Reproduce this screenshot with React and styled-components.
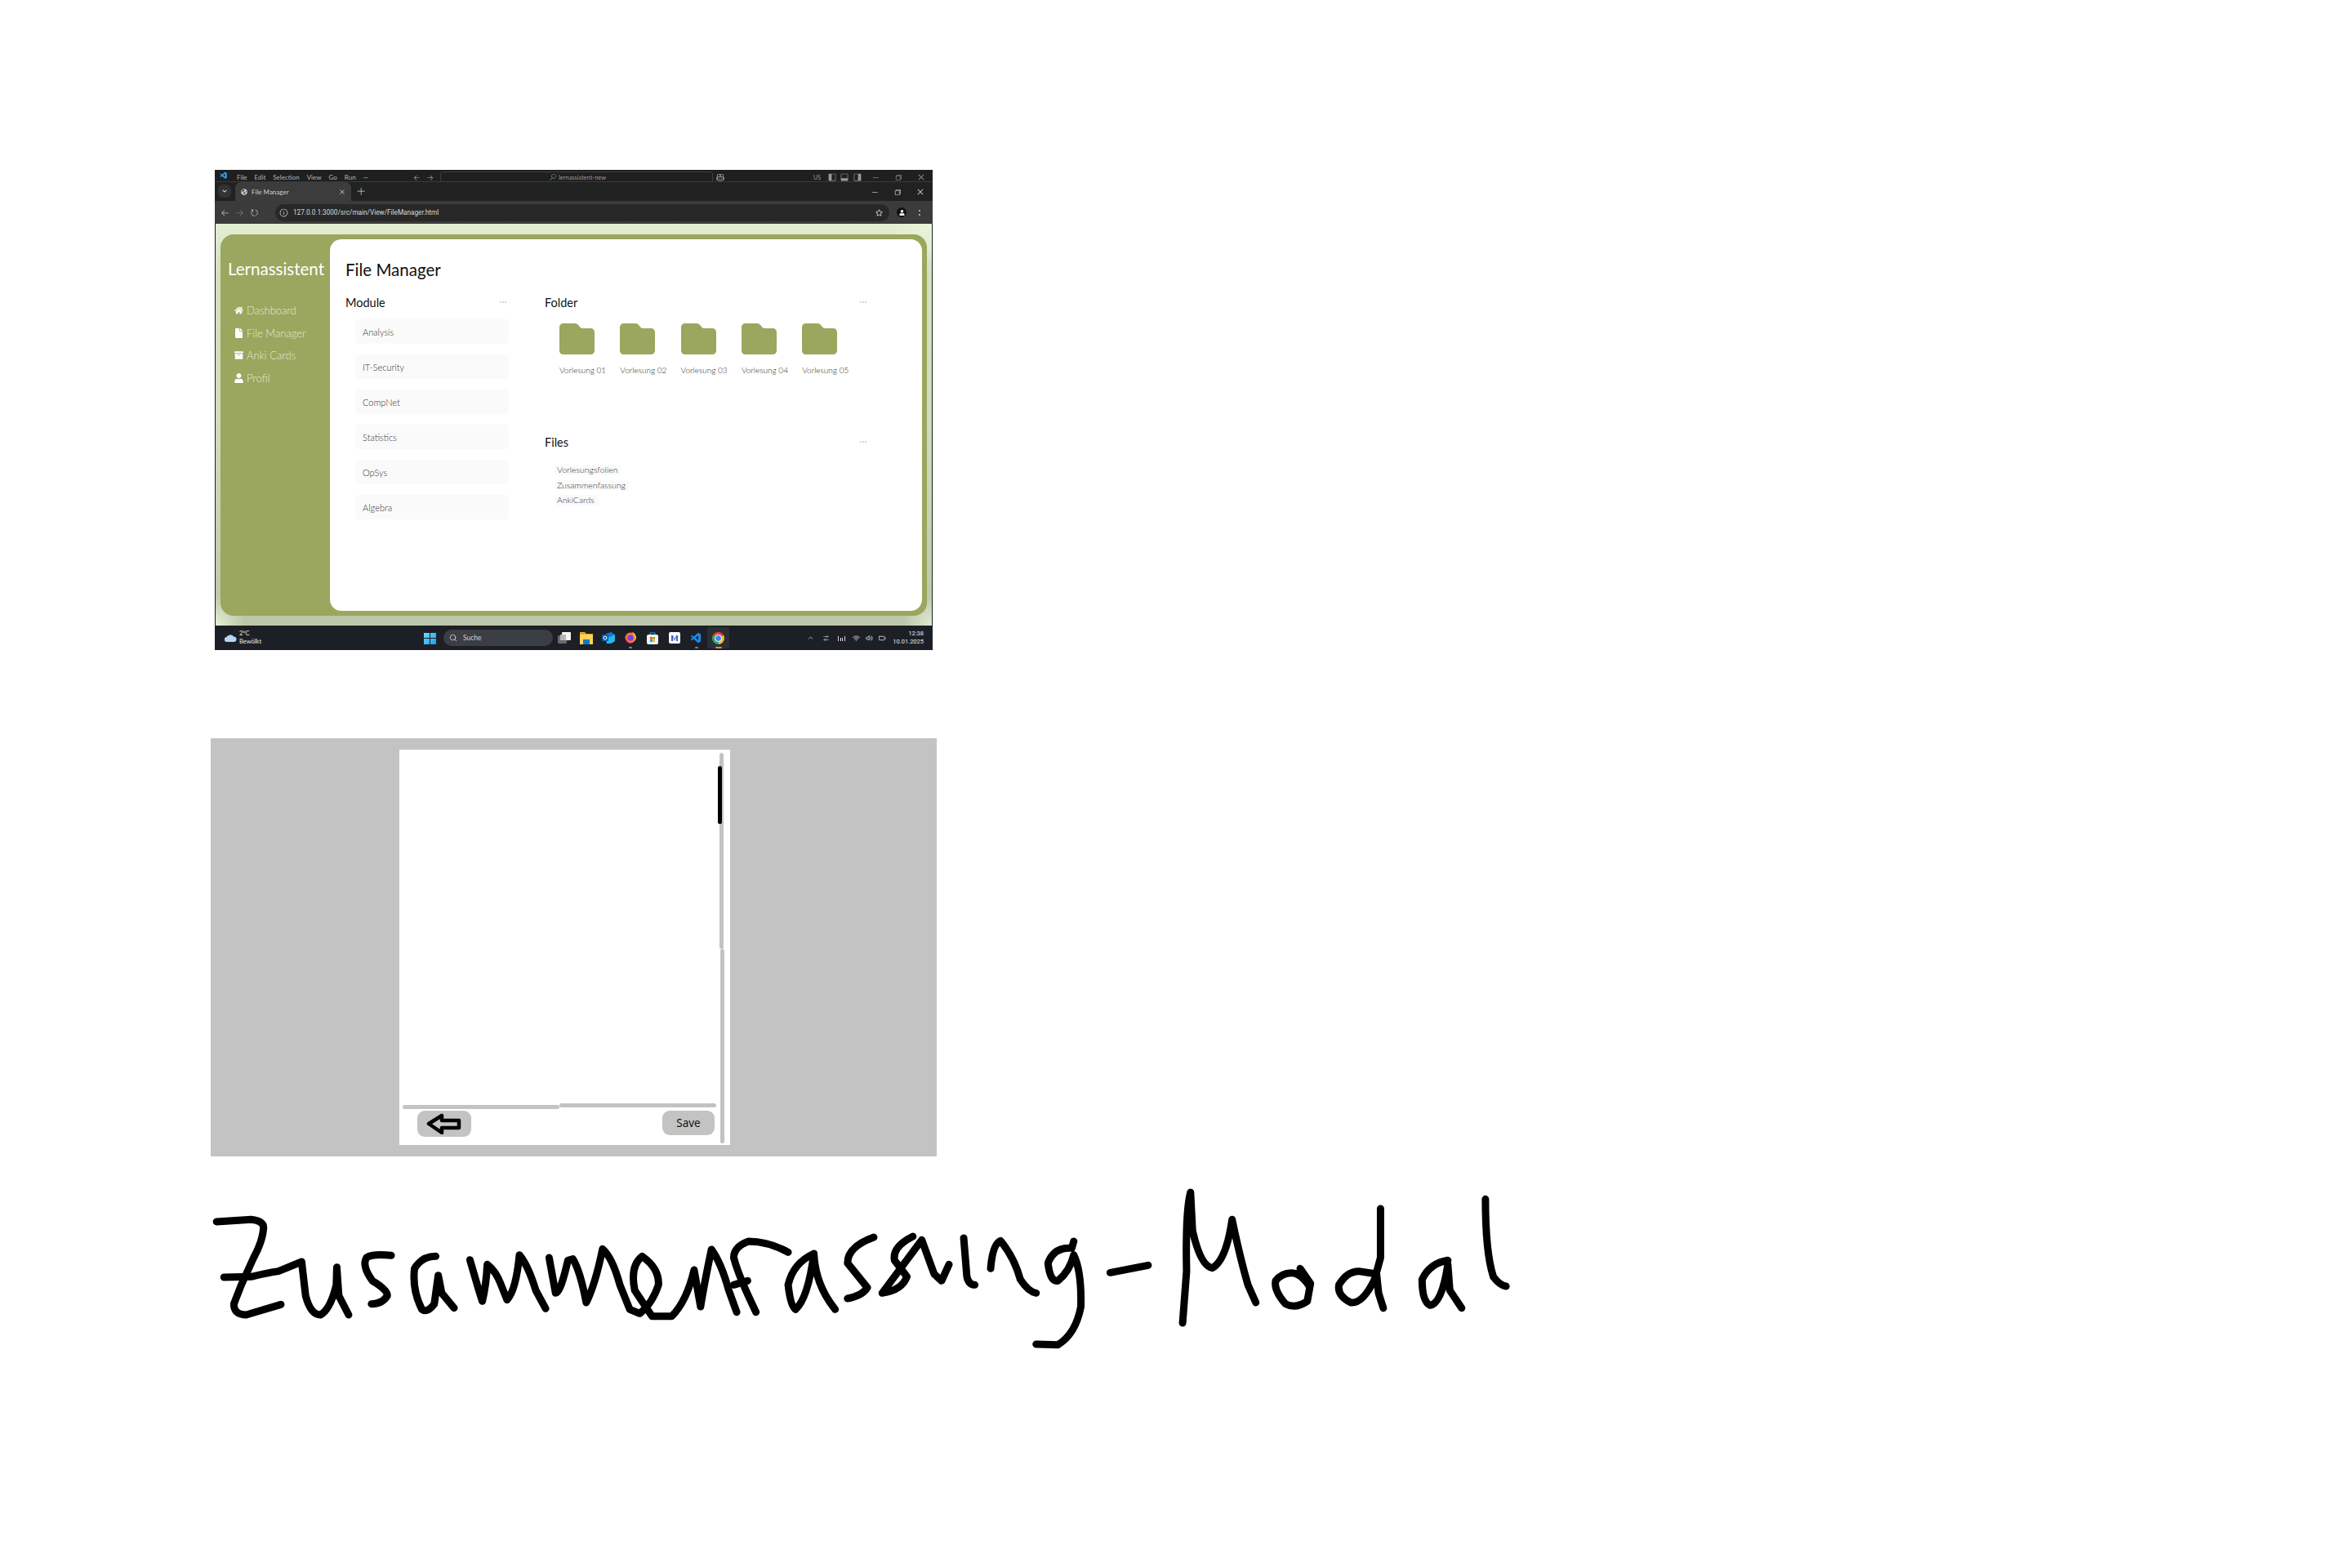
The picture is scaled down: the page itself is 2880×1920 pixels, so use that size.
import React from "react";
import styled, { createGlobalStyle } from "styled-components";
import { FaHome, FaFile, FaArchive, FaUser, FaGlobeAmericas, FaRegStar, FaChevronDown } from "react-icons/fa";
import { VscVscode, VscChromeMinimize, VscChromeRestore, VscChromeClose, VscLayoutSidebarLeft, VscLayoutPanel, VscLayoutSidebarRight, VscArrowLeft, VscArrowRight, VscSearch, VscRefresh, VscInfo, VscKebabVertical, VscAdd, VscCopilot, VscChevronUp, VscSettings } from "react-icons/vsc";
import { FiWifi, FiVolume2, FiBattery, FiSearch } from "react-icons/fi";

const Global = createGlobalStyle`
  html, body { margin: 0; padding: 0; background: #fff; }
  * { box-sizing: border-box; }
`;

const GREEN = "#9ba65e";
const GRAY = "#c3c3c3";

const Canvas = styled.div`
  position: relative;
  width: 2880px;
  height: 1920px;
  background: #fff;
  overflow: hidden;
  font-family: "Lato", "Open Sans", sans-serif;
`;

const Shot = styled.div`
  position: absolute;
  left: 263px;
  top: 208px;
  width: 879px;
  height: 588px;
  display: flex;
  flex-direction: column;
  background: #1f1f1f;
  overflow: hidden;
`;

const EditorBar = styled.div`
  height: 14px;
  flex: none;
  display: flex;
  align-items: flex-start;
  padding: 2px 0 0 6px;
  background: #1f1f1f;
  color: #b5b5b5;
  font-size: 8px;
  line-height: 9px;
  overflow: hidden;
`;
const EditorMenu = styled.div`
  display: flex;
  gap: 9px;
  margin-left: 11px;
  width: 216px;
  padding-top: 3px;
`;
const EditorNav = styled.div`
  display: flex;
  gap: 6.5px;
  width: 33px;
  padding-top: 3px;
  font-size: 9px;
`;
const EditorSearch = styled.div`
  width: 334px;
  height: 14px;
  border: 1px solid #3d3d3d;
  border-radius: 3px;
  padding: 2px 0 0 133px;
  display: flex;
  gap: 3px;
  color: #9a9a9a;
  font-size: 7.5px;
`;
const EditorIcons = styled.div`
  display: flex;
  align-items: center;
  padding-top: 2px;
  font-size: 10px;
  color: #9a9a9a;
`;
const IconSlot = styled.span`
  display: inline-flex;
  width: ${(p) => p.$w || 16}px;
  justify-content: center;
  align-items: center;
`;
const KeyboardTag = styled.span`
  display: inline-flex;
  width: ${(p) => p.$w}px;
  justify-content: flex-end;
  padding-right: 7px;
  font-size: 7px;
`;

const TabStrip = styled.div`
  height: 24px;
  flex: none;
  display: flex;
  align-items: flex-end;
  background: #202222;
  color: #dcdcdc;
  border-top: 1px solid #3a3a3a;
  padding-left: 4px;
`;
const TabMenu = styled.div`
  width: 16px;
  height: 16px;
  margin: 0 5px 4px 0;
  border-radius: 6px;
  background: #333;
  display: flex;
  align-items: center;
  justify-content: center;
  font-size: 6px;
`;
const Tab = styled.div`
  width: 142px;
  height: 23px;
  background: #3c3c3c;
  border-radius: 7px 7px 0 0;
  display: flex;
  align-items: center;
  gap: 5px;
  padding: 0 7px;
  font-size: 8px;
  color: #cfcfcf;
`;
const TabTitle = styled.span`
  flex: 1;
`;
const NewTab = styled.div`
  width: 24px;
  height: 23px;
  margin-left: 0;
  display: flex;
  align-items: center;
  justify-content: center;
  font-size: 11px;
`;
const Spacer = styled.div`
  flex: 1;
`;
const WinControls = styled.div`
  display: flex;
  align-items: center;
  height: 23px;
  padding-right: 1px;
  font-size: 10px;
`;
const WinSlot = styled.span`
  width: 28px;
  display: inline-flex;
  justify-content: center;
`;

const Toolbar = styled.div`
  height: 28px;
  flex: none;
  background: #3b3b3b;
  display: flex;
  align-items: center;
  padding-left: 7px;
  color: #c9c9c9;
  font-size: 11px;
`;
const NavIcons = styled.div`
  display: flex;
  width: 67px;
  gap: 7px;
`;
const Address = styled.div`
  width: 752px;
  height: 21px;
  margin-right: 0;
  background: #282828;
  border-radius: 11px;
  display: flex;
  align-items: center;
  padding: 0 8px 0 5px;
  gap: 6px;
  font-size: 8.2px;
  color: #d8d8d8;
  font-family: "Roboto", sans-serif;
`;
const Url = styled.span`
  flex: 1;
  padding-bottom: 1px;
`;
const ProfileDot = styled.span`
  width: 12px;
  height: 12px;
  border-radius: 50%;
  background: #111;
  color: #fff;
  display: flex;
  align-items: center;
  justify-content: center;
  font-size: 7px;
  margin-left: 9px;
`;

const Page = styled.div`
  flex: 1;
  min-height: 0;
  margin: 0 1px;
  padding: 13px 6px 12px 6px;
  background:
    radial-gradient(circle at 100% 0, #e9f4d9 0, rgba(233,244,217,0) 50px),
    radial-gradient(circle at 100% 100%, #e0ebcf 0, rgba(224,235,207,0) 36px),
    radial-gradient(circle at 0 100%, #e3eed4 0, rgba(227,238,212,0) 36px),
    linear-gradient(180deg, #e3eed3 0%, #d4e0c2 12%, #d0dcbe 50%, #bbc7a8 100%);
  display: flex;
`;
const AppFrame = styled.div`
  flex: 1;
  display: flex;
  background: ${GREEN};
  border-radius: 16px;
  padding: 6px 6px 6px 0;
`;
const Sidebar = styled.aside`
  width: 134px;
  flex: none;
  padding: 24px 0 0 9px;
  color: #fff;
`;
const Brand = styled.div`
  font-size: 20.5px;
  line-height: 24px;
  margin-bottom: 31px;
  white-space: nowrap;
`;
const NavList = styled.nav`
  display: flex;
  flex-direction: column;
  gap: 11.6px;
  padding-left: 8px;
`;
const NavItem = styled.div`
  display: flex;
  align-items: center;
  height: 16px;
  gap: 4px;
  font-size: 13px;
  font-weight: 300;
  color: #e6ebcf;
  svg { width: 11px; height: 12px; color: #fff; flex: none; }
`;
const Panel = styled.main`
  flex: 1;
  background: #fff;
  border-radius: 14px;
  padding: 25px 0 0 19px;
  color: #111;
`;
const PageTitle = styled.h1`
  margin: 0 0 19px;
  font-size: 20.5px;
  line-height: 24px;
  font-weight: 400;
`;
const Columns = styled.div`
  display: grid;
  grid-template-columns: 200px 397px;
  column-gap: 44px;
`;
const SectionHead = styled.div`
  display: flex;
  justify-content: space-between;
  align-items: center;
  height: 18px;
  padding-right: ${(p) => p.$pad || 3}px;
`;
const SectionTitle = styled.h2`
  margin: 0;
  font-size: 14.5px;
  font-weight: 400;
`;
const Dots = styled.span`
  display: flex;
  gap: 1px;
  i { width: 2px; height: 2px; background: #d6d6d6; display: block; }
`;
const ModuleList = styled.div`
  display: flex;
  flex-direction: column;
  gap: 12.6px;
  margin: 12px 0 0 12px;
`;
const ModuleItem = styled.div`
  height: 30.4px;
  background: #fafafa;
  border-radius: 4px;
  padding-left: 9px;
  display: flex;
  align-items: center;
  font-size: 11px;
  font-weight: 300;
  color: #333;
`;
const FolderSection = styled.section`
  height: 171px;
`;
const FolderRow = styled.div`
  display: flex;
  margin: 17px 0 0 18px;
`;
const FolderTile = styled.div`
  width: 74.3px;
  flex: none;
`;
const FolderLabel = styled.div`
  font-size: 10px;
  line-height: 12px;
  margin-top: 13px;
  font-weight: 300;
  color: #333;
  white-space: nowrap;
`;
const FileList = styled.div`
  display: flex;
  flex-direction: column;
  align-items: flex-start;
  gap: 6px;
  margin: 19px 0 0 12px;
`;
const FileItem = styled.div`
  background: #fafafa;
  border-radius: 4px;
  height: 12.5px;
  line-height: 12.5px;
  padding: 0 5px 0 3px;
  font-size: 10.5px;
  font-weight: 300;
  color: #333;
  white-space: nowrap;
`;

const Taskbar = styled.footer`
  height: 30px;
  flex: none;
  background: #1c2026;
  display: flex;
  align-items: center;
  color: #e8e8e8;
  position: relative;
`;
const Weather = styled.div`
  width: 256px;
  padding-left: 12px;
  display: flex;
  align-items: center;
  gap: 3px;
  font-size: 7.5px;
  line-height: 10px;
`;
const Search = styled.div`
  width: 134px;
  height: 20px;
  border-radius: 10px;
  background: #3b3e44;
  display: flex;
  align-items: center;
  gap: 7px;
  padding-left: 7px;
  font-size: 8.5px;
  color: #cfcfcf;
  margin: 0 0 0 9px;
`;
const TaskIcons = styled.div`
  display: flex;
  align-items: center;
  height: 30px;
`;
const TaskSlot = styled.div`
  width: 27px;
  height: 26px;
  display: flex;
  align-items: center;
  justify-content: center;
  border-radius: 3px;
  position: relative;
  background: ${(p) => (p.$active ? "#2a2e35" : "transparent")};
`;
const RunDot = styled.span`
  position: absolute;
  bottom: 0;
  left: 50%;
  margin-left: ${(p) => (p.$wide ? -4 : -2)}px;
  width: ${(p) => (p.$wide ? 8 : 4)}px;
  height: 2px;
  border-radius: 1px;
  background: ${(p) => p.$color || "#888"};
`;
const Tray = styled.div`
  margin-left: auto;
  display: flex;
  align-items: center;
  padding-right: 11px;
  font-size: 9px;
`;
const Clock = styled.div`
  text-align: right;
  font-size: 7.5px;
  line-height: 10px;
  margin-left: 5px;
  font-family: "Roboto", sans-serif;
`;
const ChromeIcon = styled.span`
  width: 15px;
  height: 15px;
  border-radius: 50%;
  background: conic-gradient(#e8453c 0 60deg, #f9bb2d 60deg 180deg, #34a853 180deg 300deg, #e8453c 300deg);
  display: flex;
  align-items: center;
  justify-content: center;
  &::after {
    content: "";
    width: 7px;
    height: 7px;
    border-radius: 50%;
    background: #4285f4;
    border: 1.2px solid #fff;
  }
`;

const Wire = styled.div`
  position: absolute;
  left: 258px;
  top: 904px;
  width: 889px;
  height: 512px;
  background: ${GRAY};
  padding: 14px 0 0 231px;
`;
const Modal = styled.div`
  width: 405px;
  height: 484px;
  background: #fff;
  display: flex;
  padding: 4px 7px 2px 4px;
  gap: 4px;
`;
const ModalMain = styled.div`
  flex: 1;
  display: flex;
  flex-direction: column;
`;
const ModalBody = styled.div`
  flex: 1;
`;
const RuleRow = styled.div`
  display: flex;
  height: 7px;
`;
const RulePart = styled.span`
  flex: 1;
  height: 5px;
  background: ${GRAY};
  margin-top: ${(p) => p.$drop}px;
  border-radius: 3px;
`;
const ActionRow = styled.div`
  display: flex;
  justify-content: space-between;
  align-items: flex-start;
  padding: 2px 2px 8px 18px;
`;
const WireButton = styled.button`
  width: ${(p) => p.$w}px;
  height: ${(p) => p.$h}px;
  border: 0;
  padding: 0;
  border-radius: 9px;
  background: ${GRAY};
  color: #111;
  font-family: "Noto Sans", sans-serif;
  font-size: 13.5px;
  display: flex;
  align-items: center;
  justify-content: center;
`;
const ScrollTrack = styled.div`
  width: 6px;
  position: relative;
  display: flex;
  flex-direction: column;
`;
const TrackPart = styled.span`
  display: block;
  height: ${(p) => p.$h}px;
  width: 5px;
  margin-left: ${(p) => p.$x}px;
  background: ${GRAY};
  border-radius: 3px;
`;
const Thumb = styled.span`
  position: absolute;
  left: -2px;
  top: 16px;
  width: 5px;
  height: 71px;
  border-radius: 3px;
  background: #000;
`;

const Ink = styled.svg`
  position: absolute;
  left: 240px;
  top: 1440px;
  width: 1700px;
  height: 240px;
  path {
    fill: none;
    stroke: #000;
    stroke-width: 9px;
    stroke-linecap: round;
    stroke-linejoin: round;
    vector-effect: non-scaling-stroke;
  }
`;

const FolderIcon = () => (
  <svg width="43" height="38" viewBox="0 0 43 38" style={{ display: "block" }}>
    <path fill={GREEN} d="M5 0h14c3 0 4 2 5 3s2 3 4 3h10c3 0 5 2 5 5v22c0 3-2 5-5 5H5c-3 0-5-2-5-5V5c0-3 2-5 5-5z" />
  </svg>
);

const Dot3 = () => (
  <Dots>
    <i />
    <i />
    <i />
  </Dots>
);

const modules = ["Analysis", "IT-Security", "CompNet", "Statistics", "OpSys", "Algebra"];
const folders = ["Vorlesung 01", "Vorlesung 02", "Vorlesung 03", "Vorlesung 04", "Vorlesung 05"];
const files = ["Vorlesungsfolien", "Zusammenfassung", "AnkiCards"];

const Win = () => (
  <svg width="15" height="15" viewBox="0 0 15 15">
    <defs>
      <linearGradient id="wg" x1="0" y1="0" x2="1" y2="1">
        <stop offset="0" stopColor="#6fdcff" />
        <stop offset="1" stopColor="#1a9be8" />
      </linearGradient>
    </defs>
    <path fill="url(#wg)" d="M0 1h7v6H0zM8 1h7v6H8zM0 8h7v7H0zM8 8h7v7H8z" />
  </svg>
);
const TaskView = () => (
  <svg width="16" height="14" viewBox="0 0 16 14">
    <rect x="0" y="4" width="11" height="10" rx="1.5" fill="#6a6a6a" />
    <rect x="5" y="0" width="11" height="10" rx="1" fill="#f4f4f4" />
    <rect x="3" y="3" width="7" height="7" fill="#b5b5b5" />
  </svg>
);
const Explorer = () => (
  <svg width="16" height="15" viewBox="0 0 16 15">
    <path fill="#e3a91f" d="M0 0h6l2 2h8v13H0z" />
    <path fill="#fcd45a" d="M0 3h16v12H0z" />
    <path fill="#0a7cc4" d="M4 9h8v6H4z" />
  </svg>
);
const Outlook = () => (
  <svg width="16" height="14" viewBox="0 0 16 14">
    <path fill="#0f78d4" d="M5 2 11 0l5 3v8l-5 3H6z" />
    <path fill="#29b6e8" d="M5 8l11-5v8l-5 3H6z" />
    <rect x="0" y="3" width="8" height="8" rx="1" fill="#0b5cad" />
    <circle cx="4" cy="7" r="2" fill="none" stroke="#fff" strokeWidth="1" />
  </svg>
);
const Firefox = () => (
  <svg width="14" height="14" viewBox="0 0 14 14">
    <circle cx="7" cy="7" r="6.5" fill="#ff7139" />
    <path fill="#ffbd4f" d="M9 0c4 1 5 5 5 7 0 1-1 3-2 4 1-4-1-8-3-11z" />
    <circle cx="7" cy="7" r="3.6" fill="#7542e5" />
    <path fill="#e31587" d="M1 8c0 3 3 6 6 6-2-1-4-3-6-6z" />
  </svg>
);
const Store = () => (
  <svg width="14" height="15" viewBox="0 0 14 15">
    <path fill="none" stroke="#1ea7e1" strokeWidth="1" d="M4 3V1h6v2" />
    <rect x="0" y="3" width="14" height="12" rx="2" fill="#f2f2f2" />
    <path fill="#f25022" d="M4 6h2.8v2.8H4z" />
    <path fill="#7fba00" d="M7.2 6H10v2.8H7.2z" />
    <path fill="#00a4ef" d="M4 9.2h2.8V12H4z" />
    <path fill="#ffb900" d="M7.2 9.2H10V12H7.2z" />
  </svg>
);
const AppTile = () => (
  <svg width="14" height="14" viewBox="0 0 14 14">
    <rect width="14" height="14" rx="2" fill="#fff" />
    <path fill="#4a63b8" d="M3 4h2v7H3zM9 4h2v7H9z" />
    <path fill="#7b8fd4" d="M5 4l2 4 2-4v3L7 11 5 7z" />
  </svg>
);

export default function App() {
  return (
    <Canvas>
      <Global />
      <Shot>
        <EditorBar>
          <VscVscode size={10} color="#2f9fe8" />
          <EditorMenu>
            <span>File</span>
            <span>Edit</span>
            <span>Selection</span>
            <span>View</span>
            <span>Go</span>
            <span>Run</span>
            <span>···</span>
          </EditorMenu>
          <EditorNav>
            <VscArrowLeft />
            <VscArrowRight />
          </EditorNav>
          <EditorSearch>
            <VscSearch size={8} />
            <span>lernassistent-new</span>
          </EditorSearch>
          <EditorIcons>
            <IconSlot $w={18}><VscCopilot /></IconSlot>
            <KeyboardTag $w={121}>US</KeyboardTag>
            <IconSlot $w={14}><VscLayoutSidebarLeft /></IconSlot>
            <IconSlot><VscLayoutPanel /></IconSlot>
            <IconSlot><VscLayoutSidebarRight /></IconSlot>
            <IconSlot $w={28}><VscChromeMinimize /></IconSlot>
            <IconSlot $w={28}><VscChromeRestore /></IconSlot>
            <IconSlot $w={28}><VscChromeClose /></IconSlot>
          </EditorIcons>
        </EditorBar>

        <TabStrip>
          <TabMenu><FaChevronDown /></TabMenu>
          <Tab>
            <FaGlobeAmericas size={8} />
            <TabTitle>File Manager</TabTitle>
            <VscChromeClose size={8} />
          </Tab>
          <NewTab><VscAdd /></NewTab>
          <Spacer />
          <WinControls>
            <WinSlot><VscChromeMinimize /></WinSlot>
            <WinSlot><VscChromeRestore /></WinSlot>
            <WinSlot><VscChromeClose /></WinSlot>
          </WinControls>
        </TabStrip>

        <Toolbar>
          <NavIcons>
            <VscArrowLeft />
            <VscArrowRight color="#777" />
            <VscRefresh />
          </NavIcons>
          <Address>
            <VscInfo size={11} />
            <Url>127.0.0.1:3000/src/main/View/FileManager.html</Url>
            <FaRegStar size={9} />
          </Address>
          <ProfileDot><FaUser /></ProfileDot>
          <IconSlot $w={25}><VscKebabVertical size={10} /></IconSlot>
        </Toolbar>

        <Page>
          <AppFrame>
            <Sidebar>
              <Brand>Lernassistent</Brand>
              <NavList>
                <NavItem><FaHome />Dashboard</NavItem>
                <NavItem><FaFile />File Manager</NavItem>
                <NavItem><FaArchive />Anki Cards</NavItem>
                <NavItem><FaUser />Profil</NavItem>
              </NavList>
            </Sidebar>
            <Panel>
              <PageTitle>File Manager</PageTitle>
              <Columns>
                <section>
                  <SectionHead>
                    <SectionTitle>Module</SectionTitle>
                    <Dot3 />
                  </SectionHead>
                  <ModuleList>
                    {modules.map((m) => (
                      <ModuleItem key={m}>{m}</ModuleItem>
                    ))}
                  </ModuleList>
                </section>
                <div>
                  <FolderSection>
                    <SectionHead>
                      <SectionTitle>Folder</SectionTitle>
                      <Dot3 />
                    </SectionHead>
                    <FolderRow>
                      {folders.map((f) => (
                        <FolderTile key={f}>
                          <FolderIcon />
                          <FolderLabel>{f}</FolderLabel>
                        </FolderTile>
                      ))}
                    </FolderRow>
                  </FolderSection>
                  <section>
                    <SectionHead>
                      <SectionTitle>Files</SectionTitle>
                      <Dot3 />
                    </SectionHead>
                    <FileList>
                      {files.map((f) => (
                        <FileItem key={f}>{f}</FileItem>
                      ))}
                    </FileList>
                  </section>
                </div>
              </Columns>
            </Panel>
          </AppFrame>
        </Page>

        <Taskbar>
          <Weather>
            <svg width="15" height="10" viewBox="0 0 15 10">
              <path fill="#b8d4f5" d="M3 10a3 3 0 0 1-.5-6A5 5 0 0 1 11 3.5 3.3 3.3 0 0 1 12 10z" />
            </svg>
            <div>
              2°C
              <br />
              Bewölkt
            </div>
          </Weather>
          <Win />
          <Search>
            <FiSearch size={10} />
            <span>Suche</span>
          </Search>
          <TaskIcons>
            <TaskSlot><TaskView /></TaskSlot>
            <TaskSlot><Explorer /></TaskSlot>
            <TaskSlot><Outlook /></TaskSlot>
            <TaskSlot><Firefox /><RunDot /></TaskSlot>
            <TaskSlot><Store /></TaskSlot>
            <TaskSlot><AppTile /></TaskSlot>
            <TaskSlot><VscVscode size={15} color="#1e88e5" /><RunDot /></TaskSlot>
            <TaskSlot $active><ChromeIcon /><RunDot $wide $color="#f0806c" /></TaskSlot>
          </TaskIcons>
          <Tray>
            <IconSlot $w={19}><VscChevronUp /></IconSlot>
            <IconSlot $w={19}><VscSettings /></IconSlot>
            <IconSlot $w={19}>
              <svg width="9" height="7" viewBox="0 0 9 7"><path fill="#ddd" d="M0 1h1v6H0zM3 3h1v4H3zM5 3h1v4H5zM8 1h1v6H8z" /></svg>
            </IconSlot>
            <IconSlot $w={17}><FiWifi /></IconSlot>
            <IconSlot $w={15}><FiVolume2 /></IconSlot>
            <IconSlot $w={16}><FiBattery /></IconSlot>
            <Clock>
              12:38
              <br />
              10.01.2025
            </Clock>
          </Tray>
        </Taskbar>
      </Shot>

      <Wire>
        <Modal>
          <ModalMain>
            <ModalBody />
            <RuleRow>
              <RulePart $drop={2} />
              <RulePart $drop={0} />
            </RuleRow>
            <ActionRow>
              <WireButton $w={66} $h={32} aria-label="Back">
                <svg width="44" height="26" viewBox="0 0 44 26">
                  <path fill="none" stroke="#000" strokeWidth="4.5" strokeLinejoin="round" d="M3 13 19 3v6h21v9H19v6z" />
                </svg>
              </WireButton>
              <WireButton $w={64} $h={30}>Save</WireButton>
            </ActionRow>
          </ModalMain>
          <ScrollTrack>
            <TrackPart $x={0} $h={240} />
            <TrackPart $x={1} $h={238} />
            <Thumb />
          </ScrollTrack>
        </Modal>
      </Wire>

      <Ink viewBox="240 1440 1700 240" role="img" aria-label="Zusammenfassung-Modal">
        <g transform="translate(250 1440) scale(0.606 0.3333)">
          <path d="M25 168L95 160Q120 165 120 190Q118 240 100 300Q85 360 75 400L60 470Q60 510 85 510L155 472" />
          <path d="M40 372L95 370Q130 355 150 350L197 315L205 440Q215 510 235 510Q255 490 267 400L268 335L272 440L292 510" />
          <path d="M378 292Q340 285 328 300Q318 330 340 385Q372 420 370 440Q360 470 338 470" />
          <path d="M468 295Q440 295 425 340Q420 420 440 490Q450 505 465 470L473 365L480 430L505 485" />
          <path d="M537 308L555 420L562 460Q570 400 572 325Q590 350 600 400L612 455Q630 420 637 290Q655 330 670 420L690 487" />
          <path d="M697 300L710 430Q720 430 735 310L745 305Q760 350 772 465Q790 400 805 268Q825 300 840 400L860 490L880 505Q905 470 918 400Q920 340 885 295Q860 330 870 420L905 515L945 515Q975 460 990 345L1003 480Q1010 400 1025 270Q1045 320 1060 420L1076 500" />
          <path d="M1180 280Q1140 240 1100 240Q1070 260 1070 300Q1080 370 1115 500" />
          <path d="M1070 400L1098 385" />
          <path d="M1232 285Q1190 320 1180 400Q1185 480 1195 490Q1220 450 1232 285Q1235 400 1275 490" />
          <path d="M1353 225Q1300 260 1300 320L1340 410Q1330 440 1300 450" />
          <path d="M1432 222Q1390 260 1395 310L1420 370Q1410 420 1370 430L1450 235L1475 360L1490 385L1505 325" />
        </g>
        <g transform="translate(1150 1440) scale(0.4847 0.3333)">
          <path d="M62 228L70 370Q75 400 90 400" />
          <path d="M130 340Q135 250 155 238Q190 300 205 380Q225 425 245 430" />
          <path d="M340 240L335 265Q290 260 275 320Q280 390 300 385Q330 350 340 290Q360 350 358 480Q345 580 300 620L245 618" />
          <path d="M432 355L528 328" />
          <path d="M615 540L625 350Q622 130 635 60L640 200Q660 330 690 338Q725 310 740 160Q760 300 780 400L800 465" />
          <path d="M912 340L938 395L930 460Q900 490 875 470Q845 420 850 385Q870 350 900 358Q920 370 935 405" />
          <path d="M1115 120L1115 300L1100 380Q1070 470 1040 465Q1005 440 1010 400Q1030 350 1060 350L1105 360L1110 430L1122 485" />
          <path d="M1285 310Q1240 320 1220 380Q1220 460 1240 475Q1270 470 1285 325L1290 420L1320 485" />
          <path d="M1380 85Q1380 280 1400 370Q1415 400 1432 405" />
        </g>
      </Ink>
    </Canvas>
  );
}
